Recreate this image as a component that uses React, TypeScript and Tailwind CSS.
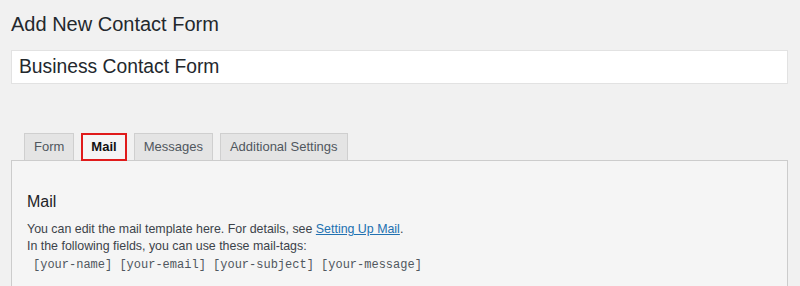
import React from "react";

const tabs = ["Form", "Mail", "Messages", "Additional Settings"];

function Tab({ label, active }: { label: string; active?: boolean }) {
  if (active) {
    return (
      <div className="relative -mb-px flex h-[28px] items-center border-2 border-[#e01b1b] bg-[#f5f5f5] px-[8px] text-[13px] font-bold text-[#111]">
        {label}
      </div>
    );
  }
  return (
    <div className="flex h-[27px] items-center border border-b-0 border-[#cfcfcf] bg-[#e4e4e4] px-[9px] text-[13px] text-[#50575e]">
      {label}
    </div>
  );
}

export default function App() {
  return (
    <div className="flex h-screen w-full flex-col overflow-hidden bg-[#f1f1f1] pl-[11px] pr-[12px] pt-[12px] font-['Liberation_Sans',Arial,sans-serif]">
      <h1 className="text-[20px] leading-[24px] text-[#23282d]">Add New Contact Form</h1>

      <div className="mt-[14px] flex h-[34px] items-center border border-[#e2e2e2] bg-white px-[7px] text-[19.3px] text-[#23282d]">
        Business Contact Form
      </div>

      <div className="mt-[49px] flex items-end gap-[7px] pl-[13px]">
        {tabs.map((t) => (
          <Tab key={t} label={t} active={t === "Mail"} />
        ))}
      </div>

      <div className="flex-1 border border-b-0 border-[#cccccc] bg-[#f5f5f5] pl-[15px] pt-[31px]">
        <h2 className="text-[16px] leading-[20px] text-[#1d2327]">Mail</h2>
        <div className="mt-[9px] text-[12.4px] leading-[17px] text-[#3c434a]">
          <p>
            You can edit the mail template here. For details, see{" "}
            <a href="#" className="text-[#2271b1] underline">
              Setting Up Mail
            </a>
            .
          </p>
          <p>In the following fields, you can use these mail-tags:</p>
          <div className="mt-[1px] pl-[6px] font-['Liberation_Mono',monospace] text-[12px] leading-[18px] text-[#50575e]">
            [your-name] [your-email] [your-subject] [your-message]
          </div>
        </div>
      </div>
    </div>
  );
}
